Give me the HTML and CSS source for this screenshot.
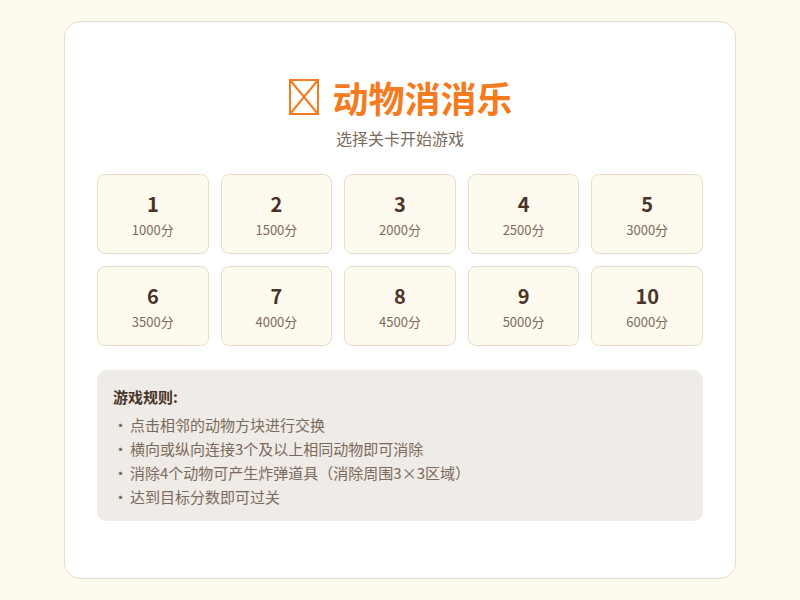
FILE: index.html
```html
<!DOCTYPE html>
<html lang="zh-CN">
<head>
  <meta charset="UTF-8">
  <title>动物消消乐</title>
  <link rel="stylesheet" href="styles.css">
</head>
<body>

  <div class="panel">
    <h1 class="title">
      <svg class="logo" width="30" height="36" viewBox="0 0 30 36">
        <rect x="1" y="1" width="28" height="34" fill="none" stroke="#f47b20" stroke-width="2"/>
        <path d="M1 1 L29 35 M29 1 L1 35" stroke="#f47b20" stroke-width="2"/>
      </svg>
      <span>动物消消乐</span>
    </h1>
    <p class="subtitle">选择关卡开始游戏</p>

    <div class="levels">
      <div class="level"><div class="num">1</div><div class="score">1000分</div></div>
      <div class="level"><div class="num">2</div><div class="score">1500分</div></div>
      <div class="level"><div class="num">3</div><div class="score">2000分</div></div>
      <div class="level"><div class="num">4</div><div class="score">2500分</div></div>
      <div class="level"><div class="num">5</div><div class="score">3000分</div></div>
      <div class="level"><div class="num">6</div><div class="score">3500分</div></div>
      <div class="level"><div class="num">7</div><div class="score">4000分</div></div>
      <div class="level"><div class="num">8</div><div class="score">4500分</div></div>
      <div class="level"><div class="num">9</div><div class="score">5000分</div></div>
      <div class="level"><div class="num">10</div><div class="score">6000分</div></div>
    </div>

    <!-- 规则说明 -->
    <div class="rules">
      <h3>游戏规则:</h3>
      <ul>
        <li>点击相邻的动物方块进行交换</li>
        <li>横向或纵向连接3个及以上相同动物即可消除</li>
        <li>消除4个动物可产生炸弹道具（消除周围3×3区域）</li>
        <li>达到目标分数即可过关</li>
      </ul>
    </div>
  </div>

</body>
</html>
```

FILE: styles.css
```css
body {
  margin: 0;
  padding: 21px 0;
  background-color: #fffaf0;
  font-family: "Noto Sans CJK SC", "Noto Sans", sans-serif;
}
.panel {
  width: 606px;
  margin: 0 auto;
  height: 492px;
  padding: 32px;
  background-color: white;
  border: 1px solid #e8dcc6;
  border-radius: 16px;
}
.title {
  margin: 19px 0 0;
  display: flex;
  justify-content: center;
  align-items: center;
  gap: 13px;
  font-size: 36px;
  line-height: 48px;
  font-weight: bold;
  color: #f47b20;
}
.logo {
  display: block;
  margin-left: 2px;
}
.subtitle {
  margin: 5px 0 0;
  text-align: center;
  font-size: 16px;
  line-height: 24px;
  color: #7a6a5c;
}
.levels {
  margin-top: 24px;
  display: grid;
  grid-template-columns: repeat(5, 1fr);
  gap: 12px;
}
.level {
  box-sizing: border-box;
  height: 80px;
  padding-top: 15px;
  background-color: #fffaf0;
  border: 1px solid #e8dcc6;
  border-radius: 8px;
  text-align: center;
}
.num {
  font-size: 20px;
  line-height: 28px;
  font-weight: bold;
  color: #4a3428;
}
.score {
  margin-top: 2px;
  font-size: 13px;
  line-height: 20px;
  color: #7a6a5c;
}
.rules {
  margin-top: 24px;
  padding: 14px 16px 12px;
  background-color: #efebe6;
  border-radius: 10px;
}
.rules h3 {
  margin: 0 0 3px;
  font-size: 15px;
  line-height: 26px;
  color: #4a3428;
}
.rules ul {
  margin: 0;
  padding: 0;
  list-style: none;
}
.rules li {
  font-size: 15px;
  line-height: 24px;
  color: #7a6a5c;
}
.rules li::before {
  content: "·";
  display: inline-block;
  width: 17px;
}
```
